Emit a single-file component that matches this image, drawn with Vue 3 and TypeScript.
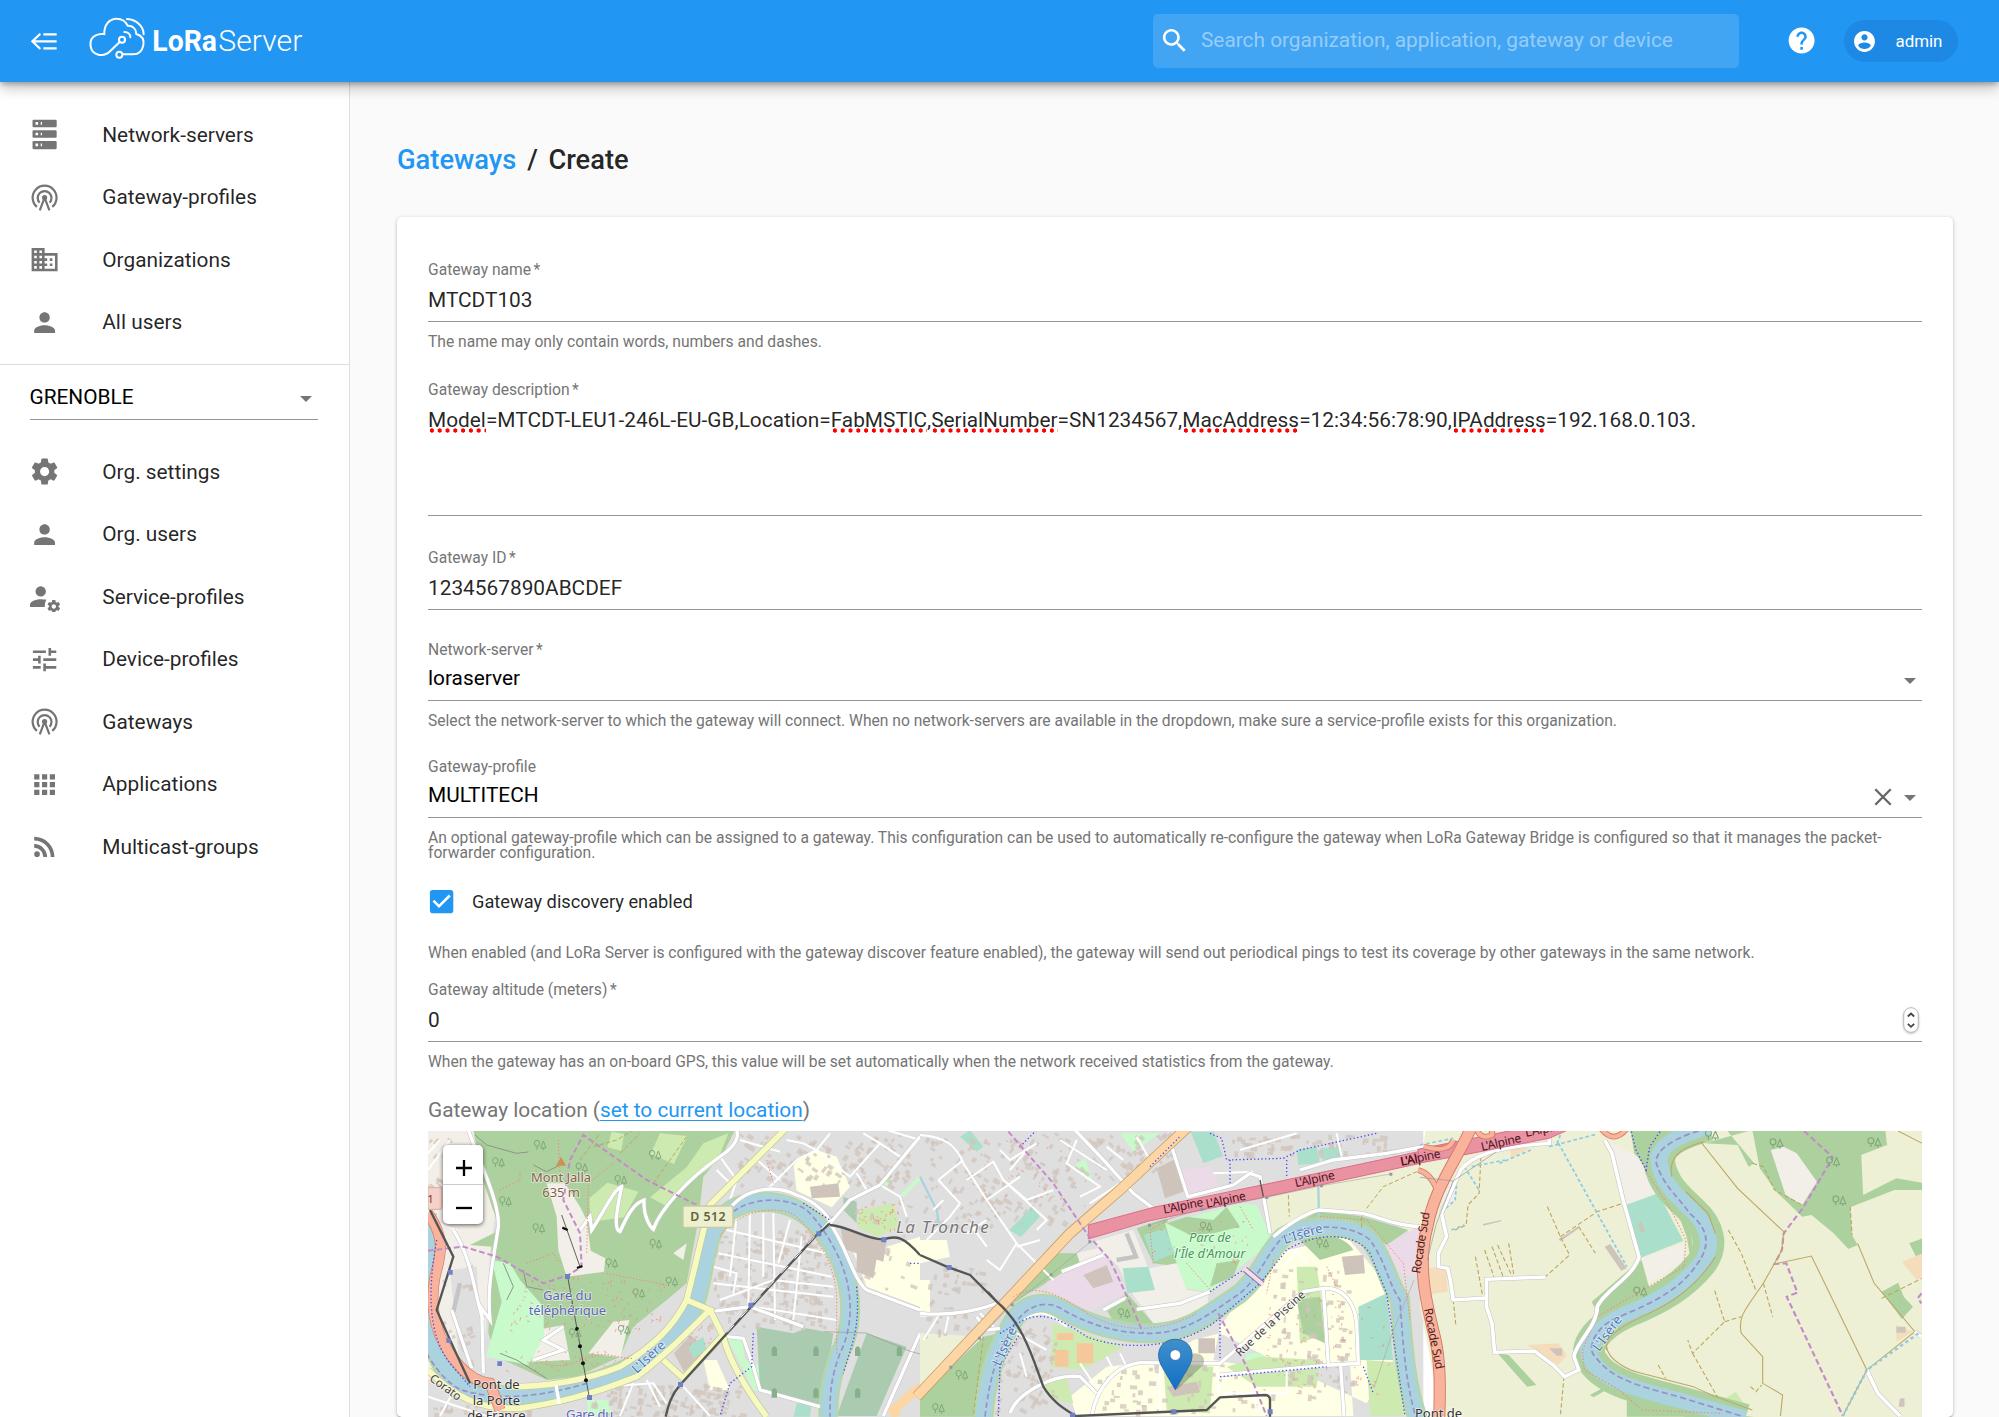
<script setup lang="ts">
interface NavItem { label: string; icon: string }
interface Block { x: number; y: number; w: number; h: number; a: number }

const person = 'M12 12c2.21 0 4-1.79 4-4s-1.79-4-4-4-4 1.79-4 4 1.79 4 4 4zm0 2c-2.67 0-8 1.34-8 4v2h16v-2c0-2.66-5.33-4-8-4z'
const gear = 'M19.43 12.98c.04-.32.07-.64.07-.98s-.03-.66-.07-.98l2.11-1.65c.19-.15.24-.42.12-.64l-2-3.46c-.12-.22-.39-.3-.61-.22l-2.49 1c-.52-.4-1.08-.73-1.69-.98l-.38-2.65C14.46 2.18 14.25 2 14 2h-4c-.25 0-.46.18-.49.42l-.38 2.65c-.61.25-1.17.59-1.69.98l-2.49-1c-.23-.09-.49 0-.61.22l-2 3.46c-.13.22-.07.49.12.64l2.11 1.65c-.04.32-.07.65-.07.98s.03.66.07.98l-2.11 1.65c-.19.15-.24.42-.12.64l2 3.46c.12.22.39.3.61.22l2.49-1c.52.4 1.08.73 1.69.98l.38 2.65c.03.24.24.42.49.42h4c.25 0 .46-.18.49-.42l.38-2.65c.61-.25 1.17-.59 1.69-.98l2.49 1c.23.09.49 0 .61-.22l2-3.46c.12-.22.07-.49-.12-.64l-2.11-1.65zM12 15.5c-1.93 0-3.5-1.57-3.5-3.5s1.57-3.5 3.5-3.5 3.5 1.57 3.5 3.5-1.57 3.5-3.5 3.5z'

const paths: Record<string, string> = {
  server: 'M3.5 .5h17a.8.8 0 0 1 .8.8v4.2a.8.8 0 0 1-.8.8h-17a.8.8 0 0 1-.8-.8V1.300a.8.8 0 0 1 .8-.8zM5 2.400v2h2v-2zm4 0v2h1v-2zM3.500 8.700h17a.8.8 0 0 1 .8.8v4.200a.8.8 0 0 1-.8.8h-17a.8.8 0 0 1-.8-.8V9.500a.8.8 0 0 1 .8-.8zM5 10.600v2h2v-2zm4 0v2h1v-2zM3.500 16.900h17a.8.8 0 0 1 .8.8v4.700a.8.8 0 0 1-.8.8h-17a.8.8 0 0 1-.8-.8v-4.700a.8.8 0 0 1 .8-.8zM5 18.900v2h2v-2zm4 0v2h1v-2z',
  domain: 'M12 7V3H2v18h20V7H12zM6 19H4v-2h2v2zm0-4H4v-2h2v2zm0-4H4V9h2v2zm0-4H4V5h2v2zm4 12H8v-2h2v2zm0-4H8v-2h2v2zm0-4H8V9h2v2zm0-4H8V5h2v2zm10 12h-8v-2h2v-2h-2v-2h2v-2h-2V9h8v10zm-2-8h-2v2h2v-2zm0 4h-2v2h2v-2z',
  person,
  gear,
  tune: 'M3 17v2h6v-2H3zM3 5v2h10V5H3zm10 16v-2h8v-2h-8v-2h-2v6h2zM7 9v2H3v2h4v2h2V9H7zm14 4v-2H11v2h10zm-6-4h2V7h4V5h-4V3h-2v6z',
  apps: 'M4 8h4V4H4v4zm6 12h4v-4h-4v4zm-6 0h4v-4H4v4zm0-6h4v-4H4v4zm6 0h4v-4h-4v4zm6-10v4h4V4h-4zm-6 4h4V4h-4v4zm6 6h4v-4h-4v4zm0 6h4v-4h-4v4z',
  rss: 'M6.18 15.640a2.180 2.180 0 1 1 0 4.360 2.180 2.180 0 0 1 0-4.360M4 4.440A15.560 15.560 0 0 1 19.560 20h-2.830A12.730 12.730 0 0 0 4 7.270V4.440m0 5.660a9.900 9.900 0 0 1 9.900 9.900h-2.830A7.070 7.070 0 0 0 4 12.930V10.100z',
}

const globalItems: NavItem[] = [
  { label: 'Network-servers', icon: 'server' },
  { label: 'Gateway-profiles', icon: 'antenna' },
  { label: 'Organizations', icon: 'domain' },
  { label: 'All users', icon: 'person' },
]
const orgItems: NavItem[] = [
  { label: 'Org. settings', icon: 'gear' },
  { label: 'Org. users', icon: 'person' },
  { label: 'Service-profiles', icon: 'service' },
  { label: 'Device-profiles', icon: 'tune' },
  { label: 'Gateways', icon: 'antenna' },
  { label: 'Applications', icon: 'apps' },
  { label: 'Multicast-groups', icon: 'rss' },
]
const description = [
  { t: 'Model', bad: true }, { t: '=MTCDT-LEU1-246L-EU-GB,Location=', bad: false },
  { t: 'FabMSTIC', bad: true }, { t: ',', bad: false }, { t: 'SerialNumber', bad: true },
  { t: '=SN1234567,', bad: false }, { t: 'MacAddress', bad: true },
  { t: '=12:34:56:78:90,', bad: false }, { t: 'IPAddress', bad: true }, { t: '=192.168.0.103.', bad: false },
]

// Seeded generator so the building footprints are the same on every load
let seed = 7
const rnd = () => { seed = (seed * 16807) % 2147483647; return seed / 2147483647 }
const scatter = (x: number, y: number, w: number, h: number, n: number, angle: number): Block[] =>
  Array.from({ length: n }, () => ({
    x: x + rnd() * w, y: y + rnd() * h, w: 7 + rnd() * 15, h: 6 + rnd() * 9,
    a: angle + (rnd() > 0.5 ? 90 : 0),
  }))
const westBuildings = [
  ...scatter(960, 40, 520, 150, 120, 35), ...scatter(880, 330, 340, 290, 190, 4),
  ...scatter(530, 790, 450, 100, 110, 12), ...scatter(30, 50, 110, 250, 35, 40),
  ...scatter(60, 440, 110, 300, 25, 70), ...scatter(40, 850, 330, 40, 30, 10), ...scatter(1120, 240, 360, 270, 50, 20),
]
const eastBuildings = [
  ...scatter(20, 40, 450, 280, 150, 32), ...scatter(450, 40, 320, 130, 60, 45),
  ...scatter(20, 440, 180, 200, 45, 10), ...scatter(240, 620, 180, 250, 70, 30),
  ...scatter(540, 730, 460, 140, 60, 2), ...scatter(1060, 430, 250, 400, 100, 5), ...scatter(920, 40, 500, 60, 60, 0),
]
const pathSpecks = [...scatter(270, 470, 470, 160, 110, 20), ...scatter(250, 690, 350, 60, 30, 40), ...scatter(770, 600, 120, 90, 25, 10), ...scatter(1310, 250, 130, 90, 30, 0)]
const eastSpecks = [...scatter(1030, 520, 380, 300, 80, 20), ...scatter(690, 300, 300, 130, 30, 10), ...scatter(150, 60, 350, 200, 30, 35)]
const trees = [[360, 75], [235, 127], [256, 244], [356, 325], [485, 143], [602, 180], [707, 372], [575, 430], [656, 520], [755, 485], [612, 630], [465, 640], [705, 105]]
const tiny = (b: Block) => `translate(${b.x.toFixed(1)} ${b.y.toFixed(1)}) rotate(${b.a})`
</script>

<template>
  <div class="app">
    <header class="bar">
      <svg class="menu" viewBox="94 94 78 56"><path d="M122 99L98 122l24 23M131 101h40M100 122h71M131 143h40" /></svg>
      <svg class="logo" viewBox="262 45 660 140">
        <g class="cloud">
          <path d="M357 126L329 153C318 164 305 167 293 164C263 157 263 116 285 106C294 101 302 101 311 102C310 74 326 56 348 56C365 56 376 66 381 77C396 76 407 87 407 102C424 107 431 120 428 136C424 155 412 163 397 163H367" />
          <circle cx="356" cy="164" r="9" /><circle cx="364" cy="119" r="9" />
          <path d="M371 96C382 96 389 103 389 112M379 57C404 58 429 77 429 103" />
        </g>
        <text x="455" y="153" class="lora" textLength="194" lengthAdjust="spacingAndGlyphs">LoRa</text>
        <text x="653" y="153" class="serv" textLength="252" lengthAdjust="spacingAndGlyphs">Server</text>
      </svg>
      <div class="search">
        <svg viewBox="0 0 24 24" class="ic"><path d="M15.5 14h-.79l-.28-.27C15.410 12.590 16 11.110 16 9.500 16 5.910 13.090 3 9.500 3S3 5.910 3 9.500 5.910 16 9.500 16c1.610 0 3.090-.59 4.230-1.570l.27.28v.79l5 4.990L20.490 19l-4.990-5zm-6 0C7.010 14 5 11.990 5 9.500S7.010 5 9.500 5 14 7.010 14 9.500 11.990 14 9.500 14z" /></svg>
        <span>Search organization, application, gateway or device</span>
      </div>
      <svg viewBox="0 0 24 24" class="ic help"><path d="M12 2C6.480 2 2 6.480 2 12s4.480 10 10 10 10-4.480 10-10S17.520 2 12 2zm1 17h-2v-2h2v2zm2.070-7.750l-.9.92C13.450 12.900 13 13.500 13 15h-2v-.5c0-1.100.45-2.100 1.170-2.830l1.240-1.260c.37-.36.59-.86.59-1.410 0-1.100-.9-2-2-2s-2 .9-2 2H8c0-2.210 1.790-4 4-4s4 1.790 4 4c0 .88-.36 1.680-.93 2.250z" /></svg>
      <div class="chip">
        <svg viewBox="0 0 24 24"><path d="M12 2C6.480 2 2 6.480 2 12s4.480 10 10 10 10-4.480 10-10S17.520 2 12 2zm0 3c1.660 0 3 1.340 3 3s-1.340 3-3 3-3-1.340-3-3 1.340-3 3-3zm0 14.200c-2.500 0-4.710-1.280-6-3.220.03-1.990 4-3.080 6-3.080 1.990 0 5.970 1.090 6 3.080-1.290 1.940-3.500 3.220-6 3.220z" /></svg>
        <span>admin</span>
      </div>
    </header>

    <div class="body">
      <nav class="side">
        <template v-for="(group, g) in [globalItems, orgItems]" :key="g">
          <div v-if="g === 1" class="org">
            <div class="orgselect"><span>GRENOBLE</span><i class="caret" /></div>
          </div>
          <ul :class="g === 0 ? 'first' : 'second'">
            <li v-for="item in group" :key="item.label">
              <svg viewBox="0 0 24 24" class="ic">
                <g v-if="item.icon === 'antenna'" class="antenna">
                  <path d="M6.100 19.100A9.200 9.200 0 1 1 17.900 19.100" /><path d="M8.100 15.900A5.300 5.300 0 1 1 15.900 15.900" />
                  <path d="M12 12L8.300 21.800M12 12L15.700 21.800" /><circle cx="12" cy="12" r="2" />
                </g>
                <g v-else-if="item.icon === 'service'">
                  <path d="M9 12a4 4 0 1 0 0-8 4 4 0 0 0 0 8zm0 2c-2.700 0-8.200 1.300-8.200 4v2h11.300c0-2 .4-4.300 1.300-5.500-1.600-.4-3.200-.5-4.400-.5z" />
                  <path :d="gear" transform="translate(13.200 13.700) scale(.49)" />
                </g>
                <path v-else fill-rule="evenodd" :d="paths[item.icon]" />
              </svg>
              <span>{{ item.label }}</span>
            </li>
          </ul>
        </template>
      </nav>

      <main>
        <h1><a>Gateways</a><b class="sep">/</b><span>Create</span></h1>
        <section class="card">
          <div class="field">
            <label>Gateway name<em>*</em></label><div class="value">MTCDT103</div>
            <p>The name may only contain words, numbers and dashes.</p>
          </div>
          <div class="field desc">
            <label>Gateway description<em>*</em></label>
            <div class="value area"><span v-for="(s, i) in description" :key="i" :class="{ bad: s.bad }">{{ s.t }}</span></div>
          </div>
          <div class="field gid">
            <label>Gateway ID<em>*</em></label><div class="value">1234567890ABCDEF</div>
          </div>
          <div class="field select ns">
            <label>Network-server<em>*</em></label>
            <div class="value"><span>loraserver</span><i class="caret" /></div>
            <p>Select the network-server to which the gateway will connect. When no network-servers are available in the dropdown, make sure a service-profile exists for this organization.</p>
          </div>
          <div class="field select gp">
            <label>Gateway-profile</label>
            <div class="value"><span>MULTITECH</span><svg class="clear" viewBox="0 0 18 18"><path d="M1.300 1.300l15.400 15.400M16.700 1.300L1.300 16.700" /></svg><i class="caret" /></div>
            <p>An optional gateway-profile which can be assigned to a gateway. This configuration can be used to automatically re-configure the gateway when LoRa Gateway Bridge is configured so that it manages the packet-<br>forwarder configuration.</p>
          </div>
          <div class="check">
            <svg viewBox="0 0 24 24"><path d="M19 3H5c-1.110 0-2 .9-2 2v14c0 1.100.89 2 2 2h14c1.110 0 2-.9 2-2V5c0-1.100-.89-2-2-2zm-9 14l-5-5 1.410-1.410L10 14.170l7.590-7.590L19 8l-9 9z" /></svg>
            <span>Gateway discovery enabled</span>
          </div>
          <p class="disc">When enabled (and LoRa Server is configured with the gateway discover feature enabled), the gateway will send out periodical pings to test its coverage by other gateways in the same network.</p>
          <div class="field alt">
            <label>Gateway altitude (meters)<em>*</em></label>
            <div class="value"><span>0</span><svg class="spin" viewBox="0 0 16 26"><rect x=".7" y=".7" width="14.600" height="24.600" rx="7.300" /><path d="M4.800 9.500L8 6.500l3.200 3M4.800 16.800L8 19.800l3.200-3" /></svg></div>
            <p>When the gateway has an on-board GPS, this value will be set automatically when the network received statistics from the gateway.</p>
          </div>
          <div class="loc">Gateway location (<a>set to current location</a>)</div>
          <div class="map">
            <svg viewBox="428 1131 1494 286" class="tiles">
              <!-- western tiles: Bastille hill and the old town -->
              <g transform="translate(420 1120) scale(.33333)">
                <rect width="1500" height="900" class="res" />
                <path class="land" d="M24 30H170L230 250 210 400 190 760 24 780z" />
                <path class="res" d="M90 450L170 440 190 760 120 750z" />
                <path class="wood" d="M160 30H945L910 100 850 170 835 300 800 490 740 540 640 620 600 710 470 770 380 780 230 710 205 640 215 380 150 375 240 330 185 170z" />
                <path class="grass" d="M575 35L612 42 604 92 562 82zM720 40L802 48 762 132 692 102zM850 70L925 40 890 130 800 192 745 262 690 232 800 142zM562 188L655 215 612 292 512 306 508 235z" />
                <path class="land" d="M380 190L435 190 480 260 500 300 512 392 556 415 552 455 440 470 415 390 410 290zM350 630L430 615 450 720 335 725zM580 605L628 600 602 712 505 700zM760 400L800 370 790 420z" />
                <path class="park" d="M215 420L270 430 300 480 370 560 372 650 325 735 198 710 245 545zM920 650L965 655 975 720 1030 740 1030 820 1000 810zM1400 200L1380 180 1420 175zM1440 225L1500 165 1500 180 1450 232zM500 840h60l20 48h-75z" />
                <path class="uni" d="M1120 130L1190 90 1250 110 1290 200 1235 262 1130 212zM1290 370L1400 380 1500 350V560L1340 500zM850 720h40l40 90h-60z" />
                <path class="big" d="M1170 200L1255 190 1260 230 1175 235zM1262 325L1400 362 1390 425 1272 388zM1310 395l60 20-10 60-50-20zM762 700l50-55 50 45-70 65z" />
                <path class="cem" d="M1010 620L1120 640 1160 625 1240 640 1205 865 1020 810zM1340 640L1460 680 1370 888H1250zM1270 230L1310 245 1310 310 1270 270z" />
                <path class="grass" d="M1320 270L1420 250 1440 320 1370 350 1310 320z" />
                <path class="pitch" d="M805 680L850 650 860 690 820 715zM1130 850h45l-5 40h-50z" />
                <rect v-for="(b, i) in westBuildings" :key="i" class="bld" :width="b.w" :height="b.h" :transform="tiny(b)" />
                <rect v-for="(b, i) in pathSpecks" :key="'p' + i" class="speck" :width="b.w / 2" height="2.500" :transform="tiny(b)" />
                <path class="street" d="M990 270L985 560M1060 280L1065 600M920 330L1220 400M895 400L1235 470M880 440L950 460 940 520M880 490L1240 530M900 540L1060 480 1240 500M1000 560L1250 600M950 290L930 470M1110 300L1075 430M1145 350L1120 600M1030 280V470M1500 60L1400 30M1040 210L1100 150 1130 120 1190 90M1100 60L1150 70 1190 90 1290 170 1380 70 1330 40M1190 90L1230 40M1310 160L1340 210M1440 110L1380 70M1000 110L1080 180M960 60L1080 95M900 110L950 180 930 240M890 150L940 200M540 800L700 790 740 850M600 888L640 790M680 780L720 860M790 800L870 888M120 780L60 888M24 830L200 888M250 850L220 888M60 60L24 100M90 60L24 150M110 330L24 300M1380 195L1440 230 1460 290" />
                <path class="bank" d="M20 280C20 500 -10 700 125 800C250 850 400 820 500 790C640 750 720 690 770 640C840 570 840 480 860 400C880 290 940 245 1030 245C1150 245 1220 330 1260 420C1310 540 1290 640 1260 700C1230 780 1225 830 1225 890" />
                <path class="river" d="M20 280C20 500 -10 700 125 800C250 850 400 820 500 790C640 750 720 690 770 640C840 570 840 480 860 400C880 290 940 245 1030 245C1150 245 1220 330 1260 420C1310 540 1290 640 1260 700C1230 780 1225 830 1225 890" />
                <path class="bound" d="M20 700C60 770 100 800 125 810C250 850 400 820 500 790M940 275C1000 230 1100 230 1160 270C1220 330 1250 400 1260 420C1310 540 1290 640 1260 700C1230 780 1230 830 1230 890" />
                <g class="wcase">
                  <path d="M930 265C980 200 1070 195 1130 225C1190 245 1230 290 1230 310C1280 380 1300 480 1340 510L1500 570M1230 310L1290 240 1380 195 1500 50M870 575L990 560M480 330L510 290 515 330C560 260 580 210 605 200C590 270 580 330 600 335C620 290 640 250 672 240C670 290 690 320 700 328C720 270 800 180 900 110C930 90 960 60 950 30M145 30C180 130 240 250 235 320C220 420 200 500 210 600L185 565 190 760M100 330C160 420 170 560 190 600M95 570L155 745M100 575L120 490M990 560L1150 620M1500 640L1390 888M340 720L430 690 370 660 430 620M920 650L970 655 1000 740 1020 810 1200 860" />
                </g>
                <g class="wroad">
                  <path d="M930 265C980 200 1070 195 1130 225C1190 245 1230 290 1230 310C1280 380 1300 480 1340 510L1500 570M1230 310L1290 240 1380 195 1500 50M870 575L990 560M480 330L510 290 515 330C560 260 580 210 605 200C590 270 580 330 600 335C620 290 640 250 672 240C670 290 690 320 700 328C720 270 800 180 900 110C930 90 960 60 950 30M145 30C180 130 240 250 235 320C220 420 200 500 210 600L185 565 190 760M100 330C160 420 170 560 190 600M95 570L155 745M990 560L1150 620M1500 640L1390 888M340 720L430 690 370 660 430 620M920 650L970 655 1000 740 1020 810 1200 860" />
                </g>
                <path class="ycase" d="M1095 28L870 255C850 330 830 420 800 540C760 620 700 680 600 740C500 780 400 800 270 800M800 540L870 570C800 640 730 710 650 770C500 830 400 850 300 865C180 870 100 830 24 750M870 570L910 650C930 730 980 810 1040 890M730 720L790 775 905 650" />
                <path class="yroad" d="M1095 28L870 255C850 330 830 420 800 540C760 620 700 680 600 740C500 780 400 800 270 800M800 540L870 570C800 640 730 710 650 770C500 830 400 850 300 865C180 870 100 830 24 750M870 570L910 650C930 730 980 810 1040 890M730 720L790 775 905 650" />
                <path class="wroad" d="M408 795L418 852" />
                <path d="M24 280C75 350 65 400 45 470C28 560 45 640 95 710C125 750 160 785 210 790L240 870" stroke="#cf7d69" stroke-width="33" fill="none" />
                <path d="M24 280C75 350 65 400 45 470C28 560 45 640 95 710C125 750 160 785 210 790L240 870" stroke="#f9b29c" stroke-width="29" fill="none" />
                <path d="M1500 800L1420 870 1430 890" stroke="#fcd6a4" stroke-width="28" fill="none" />
                <path class="blue" d="M50 360C25 500 20 640 90 730L150 800M1000 640L995 740 930 790 900 888M1310 500C1320 620 1300 660 1270 760M1150 250L1230 300M1470 430h30" />
                <path class="foot" d="M360 725C440 760 480 710 520 710C560 690 600 720 640 715M900 350C950 270 1080 250 1130 290C1210 370 1240 440 1250 520V700M240 210L300 180V150M320 430L400 400 420 430M415 60L420 160M580 130L505 190 500 400M560 460L740 495M1040 120L1060 190" />
                <path class="fence" d="M165 45L200 75 290 100 325 96M340 135L380 155 430 130M250 430L280 500 260 540M310 450L320 500 370 510M240 700L290 720 380 775" />
                <path class="cliff" d="M520 80L590 60 640 30M700 190L800 50M480 120L540 40M600 100L660 40" />
                <path class="bound wide" d="M24 392L130 380 230 410 370 490 445 465 485 440 480 340 430 240 450 120 490 45 680 180 830 255" />
                <path class="rail" d="M30 270L100 410 50 570 90 660 150 790M1230 310L1190 345 780 795C750 830 745 860 737 890M1230 315C1290 320 1340 360 1390 358C1430 345 1450 350 1500 405" />
                <path d="M1225 305L905 655" stroke="#fff" stroke-width="3" stroke-dasharray="30 30" fill="none" />
                <path d="M425 285L480 440M443 470L508 833" stroke="#444" stroke-width="2.500" fill="none" />
                <g fill="#111"><circle cx="471" cy="627" r="6" /><circle cx="480" cy="679" r="6" /><circle cx="489" cy="730" r="6" /><circle cx="498" cy="781" r="6" /></g>
                <path d="M427 323l16 7M471 444l16-6" stroke="#111" stroke-width="7" />
                <path class="stop" d="M84 450h14v14H84zM79 654h14v14H79zM232 724h14v14h-14zM435 462h15v15h-15zM501 825h15v15h-15zM774 786h15v15h-15zM985 548h15v15h-15zM1189 334h15v15h-15zM1384 352h15v15h-15z" />
                <g v-for="(t, i) in trees" :key="'t' + i" class="tree" :transform="`translate(${t[0]} ${t[1]})`"><ellipse cx="-9" cy="-5" rx="8" ry="9" /><path d="M-9 4V14M10 -12L2 9H18zM10 9V16" /></g>
                <path class="tomb" d="M1055 708v-22q8-14 16 0v22zM1180 708v-22q8-14 16 0v22zM1305 708v-22q8-14 16 0v22zM1430 708v-22q8-14 16 0v22zM1055 833v-22q8-14 16 0v22zM1180 833v-22q8-14 16 0v22zM1305 833v-22q8-14 16 0v22z" />
                <path d="M1213 635L1338 639 1471 694 1500 702" stroke="#999" stroke-width="2" fill="none" />
                <path d="M423 110L438 137H408z" fill="#d08f55" />
                <path d="M24 203H60Q66 203 66 210V262Q66 268 60 268H24z" fill="#f5d2c9" stroke="#dca99b" stroke-width="3" />
                <text x="22" y="249" font-size="34" fill="#7c3527">1</text>
                <rect x="789" y="258" width="150" height="64" rx="5" fill="#ecefd0" stroke="#c9cb9a" stroke-width="4" />
                <text x="811" y="304" font-size="37" font-weight="600" fill="#5f6337" textLength="106">D 512</text>
                <g class="halo" font-size="39">
                  <text x="333" y="185" fill="#8a5f49" textLength="180">Mont Jalla</text><text x="367" y="232" fill="#8a5f49" textLength="113">635 m</text>
                  <text x="369" y="539" fill="#5a65ba" textLength="146">Gare du</text><text x="326" y="586" fill="#5a65ba" textLength="232">téléphérique</text>
                  <text x="438" y="898" fill="#5a65ba" textLength="142">Gare du</text>
                  <text x="160" y="808" fill="#333" textLength="139">Pont de</text><text x="158" y="855" fill="#333" textLength="142">la Porte</text><text x="142" y="900" fill="#333" textLength="175">de France</text>
                  <text transform="translate(650 762) rotate(-43)" fill="#5077ba" textLength="122">L'Isère</text>
                  <text transform="translate(26 780) rotate(36)" font-size="35" fill="#444" textLength="108">Corato</text>
                </g>
              </g>

              <!-- central tiles: La Tronche and the campus -->
              <g transform="translate(920 1120) scale(.33333)">
                <rect width="1510" height="900" class="res" />
                <path class="farm" d="M1035 220L1510 120V360L1440 320 1330 280 1200 270 1060 350z" />
                <path class="wood" d="M0 830L190 650 240 640 190 890H0zM410 400L520 400 360 500 260 560 300 520zM560 570L620 520 700 610 880 580 1050 480 1030 420 1060 350 1200 270 1330 290 1465 330 1400 375 1280 300 1100 330 1000 500 800 620 600 640zM650 325L740 295 780 440 700 430z" />
                <path class="park" d="M735 310L970 250 1010 255 1050 345 1035 380 950 450 870 515 790 505 770 430zM600 40H720L640 95zM980 700l60 0 10 40-80 0zM465 135l30-20 20 60-10 10z" />
                <path class="wood" d="M740 310L800 290 880 300 920 260 960 320 880 340 810 345zM890 430L960 420 940 470 870 500z" />
                <path class="farm" d="M0 640L190 650 0 820z" />
                <path class="ind" d="M380 485L550 405 620 515 500 575 380 510zM1390 380L1510 310V470L1440 460zM780 150L870 140 900 200 800 220z" />
                <path class="land" d="M520 365L640 330 685 445 770 430 800 510 865 520 860 600 700 610 640 525 595 440zM470 400L550 380 560 410 480 430z" />
                <path class="uni" d="M0 360L80 360 90 410 0 430zM0 480h30v110H0zM1060 400L1280 350 1390 480 1420 720 1340 850 1060 720 900 640 820 660 740 720 560 740 450 830 470 888H1300L1290 730 1000 740 880 720 900 620z" />
                <path class="grass" d="M400 610L610 680 490 750 390 740zM1130 440L1190 440 1220 640 1140 670zM1340 720L1460 730 1450 888H1350zM730 730L880 740 870 880 740 870zM370 790l70-20 20 80-60-10zM920 740l100-30 180 10-10 80-180 0z" />
                <path class="wood" d="M1140 360C1200 330 1280 350 1300 390L1200 420zM1130 540L1200 530 1215 670 1150 640z" />
                <path class="pitch" d="M672 345L735 325 765 400 700 425zM268 330L335 262 360 290 302 352zM608 445L685 440 705 510 622 520zM812 35H880L910 108 850 130zM1315 560L1400 520 1420 720H1320zM120 50L150 30 190 80 170 95zM1130 90l60-10 10 50-65 5zM1200 85l60-5 10 35-60 10z" />
                <path class="big" d="M710 145L770 115 790 215 735 235zM1265 410L1330 405 1335 460 1275 465zM835 655h50v45h-50zM490 465l70-30 20 50-60 20zM740 800l90-15 10 30-80 15z" />
                <path fill="#f6c79a" d="M410 640h50v20h-50zM405 690h40v50h-40zM470 670h50v60h-50z" />
                <rect v-for="(b, i) in eastBuildings" :key="i" class="bld" :width="b.w" :height="b.h" :transform="tiny(b)" />
                <rect v-for="(b, i) in eastSpecks" :key="'s' + i" class="speck" :width="b.w / 2" height="2.500" :transform="tiny(b)" />
                <path class="bank" d="M190 895C200 760 240 670 270 620C310 540 380 540 430 570C520 620 600 640 690 640C800 640 870 580 960 520C1020 470 1040 400 1090 350C1150 315 1290 305 1350 360C1400 430 1400 480 1440 540C1450 700 1460 800 1495 900" />
                <path class="river" d="M190 895C200 760 240 670 270 620C310 540 380 540 430 570C520 620 600 640 690 640C800 640 870 580 960 520C1020 470 1040 400 1090 350C1150 315 1290 305 1350 360C1400 430 1400 480 1440 540C1450 700 1460 800 1495 900" />
                <path d="M0 170L50 270 60 330M1195 200L1197 290" stroke="#aad3df" stroke-width="7" fill="none" />
                <path class="bound" d="M195 890C210 760 240 680 275 630C310 555 380 535 430 570C520 620 600 640 690 640C800 640 870 580 960 520C1020 470 1040 400 1090 350C1150 315 1290 305 1350 360C1400 430 1400 480 1440 540C1450 700 1460 800 1490 900" />
                <path class="street" d="M0 45C80 50 110 80 130 130L200 240 290 370 400 480M55 180L130 120M55 180L120 250 90 290M140 180L220 125 250 180 320 240 400 210M200 240L300 170M250 180L380 300 350 330M140 340L200 300M290 370L240 450 200 420M320 90L270 150M240 90L270 120 350 70M90 290L20 360M150 310L200 380M360 360L290 380M420 60L560 150M470 60L440 130 540 200 480 230M600 190L510 250M560 80L610 120M650 50L690 120M70 240L40 270M560 570L620 530M960 90L1130 40M1250 40L1265 110M10 660L60 580M75 640L85 590M180 580L230 630M290 640L380 690M300 700L320 770M480 730L520 790M560 710L580 750M600 700L620 740M720 740V880M890 740L900 830M1100 740V820H910M1090 440L1130 390 1160 430M1000 800L1010 880M880 160L1000 155" />
                <g class="wcase"><path d="M465 30L560 130 640 220 700 265M755 80L805 235M0 580C100 590 180 570 260 540L440 340M805 230L940 195 990 160 1020 170 1050 340M1060 350C1120 300 1180 270 1200 270L1330 280C1400 300 1440 320 1510 320M1140 150L1240 120 1400 100 1510 80M270 880C290 820 400 760 480 770L530 820M515 888C530 800 590 730 670 728L900 730 1120 540 1150 515 1210 505 1225 735M1210 505C1270 500 1305 550 1310 610L1315 730 1230 735 900 765M1262 735L1272 888M240 625L200 630 170 590M650 568L780 550 870 515M425 455L550 405M550 570L615 535M620 340L648 410 590 420" /></g>
                <g class="wroad"><path d="M465 30L560 130 640 220 700 265M755 80L805 235M0 580C100 590 180 570 260 540L440 340M805 230L940 195 990 160 1020 170 1050 340M1060 350C1120 300 1180 270 1200 270L1330 280C1400 300 1440 320 1510 320M1140 150L1240 120 1400 100 1510 80M270 880C290 820 400 760 480 770L530 820M515 888C530 800 590 730 670 728L900 730 1120 540 1150 515 1210 505 1225 735M1210 505C1270 500 1305 550 1310 610L1315 730 1230 735 900 765M1262 735L1272 888M240 625L200 630 170 590M650 568L780 550 870 515M425 455L550 405M550 570L615 535" /></g>
                <path d="M310 600C370 560 400 590 440 620" class="street" />
                <path d="M810 15L600 210 450 340 -10 830" stroke="#c9a06c" stroke-width="33" fill="none" /><path d="M810 15L600 210 450 340 -10 830" stroke="#fcd6a4" stroke-width="28" fill="none" />
                <path d="M505 315L700 262 1050 190 1510 92V128L1050 228 690 302 505 357z" fill="#e892a2" stroke="#dc6f88" stroke-width="3" />
                <path class="blue" d="M300 80L350 30M240 640L310 600C380 570 440 610 500 650C600 690 760 690 880 610L1020 490 1100 390C1180 340 1300 330 1350 400L1400 520 1430 720 1455 888M235 888L240 740 300 640M870 40L905 55 920 120 1090 115 1140 90 1370 40M930 120L930 190M1100 120V170M870 515L970 450M900 770L1220 740M900 600V720M1330 740L1360 820M690 140L780 50" />
                <path class="foot" d="M280 530C340 490 420 520 500 580C600 640 720 640 830 580M700 430L690 330 760 290M800 430L880 520M1200 290L1340 300 1450 430 1470 600M1060 420L1040 520M960 260L1000 330M1220 440L1250 500" />
                <path class="cliff" d="M1105 225L1108 290M1340 265L1390 200 1490 155M190 650L160 888M1325 290V330" />
                <path class="bound wide" d="M265 35L400 190 500 340 570 420 640 570 670 640M895 580L980 740 1040 888" />
                <path class="rail" d="M0 405L80 440 150 465 230 545C310 610 340 720 370 800C400 850 440 870 470 890M470 888L860 870 900 832 1035 825Q1050 826 1050 840V890" />
                <path d="M205 515L290 610M1020 180L1030 230" stroke="#555" stroke-width="4" fill="none" />
                <path d="M975 448L1028 492" stroke="#8d6fa8" stroke-width="18" fill="none" /><path d="M973 446L1030 494" stroke="#f3dfe6" stroke-width="12" fill="none" />
                <path class="stop" d="M80 435h15v15H80zM754 868h15v15h-15zM1043 868h15v15h-15zM450 878h15v15h-15z" />
                <path d="M510 366L393 464 276 554 178 654 92 741M688 315L845 267 1040 232 1204 197 1412 162" stroke="#999" stroke-width="1.500" fill="none" />
                <path fill="#999" d="M505 361h9v9h-9zM389 460h9v9h-9zM272 550h9v9h-9zM174 650h9v9h-9zM88 737h9v9h-9zM684 311h9v9h-9zM841 263h9v9h-9zM1036 228h9v9h-9zM1200 193h9v9h-9zM1408 158h9v9h-9z" />
                <path d="M1482 480L1416 642 1362 804" stroke="#aaa" stroke-width="2" fill="none" />
                <g v-for="(t, i) in [[125, 765], [55, 865], [858, 320], [612, 580], [1208, 370]]" :key="'t' + i" class="tree" :transform="`translate(${t[0]} ${t[1]})`"><ellipse cx="-9" cy="-5" rx="8" ry="9" /><path d="M-9 4V14M10 -12L2 9H18zM10 9V16" /></g>
                <g class="halo">
                  <text x="-72" y="340" font-size="51" fill="#777" font-style="italic" textLength="278">La Tronche</text>
                  <text x="807" y="366" font-size="39" fill="#3f9a54" font-style="italic" textLength="126">Parc de</text>
                  <text x="763" y="413" font-size="39" fill="#3f9a54" font-style="italic" textLength="213">l'Île d'Amour</text>
                  <text transform="translate(1094 372) rotate(-17)" font-size="39" fill="#5077ba" textLength="122">L'Isère</text>
                  <text transform="translate(240 740) rotate(-65)" font-size="39" fill="#5077ba" textLength="122">L'Isère</text>
                  <text transform="translate(960 711) rotate(-43)" font-size="34" fill="#444" textLength="270">Rue de la Piscine</text>
                </g>
                <g font-size="36" fill="#4b1424">
                  <text transform="translate(732 281) rotate(-11)" textLength="122">L'Alpine</text><text transform="translate(860 264) rotate(-12)" textLength="122">L'Alpine</text>
                  <text transform="translate(1127 202) rotate(-12)" textLength="122">L'Alpine</text><text transform="translate(1444 137) rotate(-9)" textLength="122">L'Alpine</text>
                </g>
              </g>

              <!-- eastern tiles: farmland along the river -->
              <g transform="translate(1420 1120) scale(.36928 .33333)">
                <path class="farm" d="M15 30H1400V900H60L0 560V140z" />
                <path class="wood" d="M570 30H665L625 90 612 150 580 100zM770 70L860 75 890 140 905 130 830 30H1260L1265 75 1195 105 1200 225 1290 175 1370 190V210L1285 210 1165 262 1170 345 1185 375 1160 387 1120 340 1060 285 1035 290 965 215 920 145 900 30zM565 450L600 420 620 500 550 560 480 580 465 545zM210 700L240 705 315 795 290 800zM1325 370L1360 355V420L1350 425zM1250 515L1295 488 1310 530 1335 560 1305 597zM560 830L700 860 820 880 905 890H560zM460 825L510 795 520 800 470 832z" />
                <path class="land" d="M515 65L590 110 645 215 555 255 525 140zM950 90L985 80 1020 100 1075 185 1035 255 990 225zM600 415L715 370 710 430 620 490zM60 210L95 200 95 240 65 270z" />
                <path class="pitch" d="M556 256L645 220 713 362 598 413z" />
                <path class="grass" d="M820 840L855 815 880 855z" />
                <path class="yard" d="M5 445L70 440 75 515 15 525zM290 675L375 670 398 705 375 735zM1305 425L1360 400V470L1345 480zM1290 615L1335 635 1290 665zM245 85L295 85 245 115z" />
                <path class="big" d="M500 380L515 372 560 445 545 452zM170 312L220 300 220 304 172 317zM375 358L430 318 432 324 380 364zM590 310L600 305 610 335 598 338zM1290 620h25v18h-25zM1300 835h12v25h-16zM350 685h35v22h-15z" />
                <path d="M780 20C690 50 640 80 648 130C660 200 700 230 735 270C785 320 795 380 762 430C710 500 650 540 560 580C480 620 440 680 465 720C500 790 600 810 700 840L880 895" stroke="#add19e" stroke-width="86" fill="none" />
                <path d="M780 20C690 50 640 80 648 130C660 200 700 230 735 270C785 320 795 380 762 430C710 500 650 540 560 580C480 620 440 680 465 720C500 790 600 810 700 840L880 895" class="river" />
                <path d="M695 270C730 310 745 350 735 430L722 350z" class="wood" />
                <path class="bound" d="M780 25C690 50 635 90 640 130C660 200 700 230 730 280C785 330 785 380 752 430C710 500 650 540 540 590C470 620 450 690 475 710C520 780 600 800 700 830L870 888" />
                <path class="bound wide" d="M1040 33L1118 112 1038 262 985 340 980 390 960 432 992 430 1022 518 993 530 1145 888M1358 520L1348 535 1358 550" />
                <path class="track" d="M760 65L860 205 985 335 980 390 930 490C880 570 860 590 870 640L928 710V790L982 825 976 888M960 432L1060 408 1210 750M720 215L780 280 800 340M505 680C510 720 560 750 600 760L740 800 800 830 900 870M800 410C760 480 700 540 620 580C540 620 500 650 505 690M1185 370L1230 490 1340 635 1210 750 1145 888M682 170C670 110 710 80 770 65M1295 33L1360 70" />
                <path class="cliff" d="M345 260L380 350 405 405 340 470M380 350L480 275 550 250M430 320L475 400M835 330L870 400 910 512M798 512L825 605 738 700 725 660M738 700L805 830M825 605L870 590M930 490L955 590M150 410L170 530M175 390L200 470M195 380L225 470M210 375L250 470M240 370L255 470M90 540L97 615M165 110L160 220 130 255 125 315 95 330M390 770L380 888M645 735L665 775M895 800L910 815 925 795M1165 260L1170 345M1250 535L1360 475M900 130L930 140 960 210 1035 255" />
                <path d="M375 70L560 440M350 80L480 42M380 45L370 75M0 75L90 55M120 140L160 210M215 130L300 90M100 180L95 240 70 265M85 330L120 315M140 140L230 120" stroke="#8ccbe4" stroke-width="5" stroke-dasharray="10 7" fill="none" />
                <path class="foot" d="M610 150L680 270 720 360 715 440 650 480 480 590 440 690 445 750 540 810 600 870 820 880" />
                <path class="blue" d="M572 35L585 90 612 150 622 80 650 35" />
                <g class="wcase"><path d="M500 60L520 100 550 240 593 410C580 470 500 510 480 560C480 620 420 670 417 710L430 750 392 770 360 735 310 693 202 697 195 610 180 560V478L340 471M180 534L90 540 82 480 75 445 50 440 50 400 72 350 58 280M58 280L110 150C140 110 200 80 350 70V50M1210 750L1240 820 1300 888M1340 635L1358 650" /></g>
                <g class="wroad"><path d="M500 60L520 100 550 240 593 410C580 470 500 510 480 560C480 620 420 670 417 710L430 750 392 770 360 735 310 693 202 697 195 610 180 560V478L340 471M180 534L90 540 82 480 75 445 50 440 50 400 72 350 58 280M58 280L110 150C140 110 200 80 350 70V50M1210 750L1240 820 1300 888M1340 635L1358 650" /></g>
                <path d="M1210 750L1145 888M1350 640L1210 750" stroke="#8ccbe4" stroke-width="7" stroke-dasharray="9 9" fill="none" />
                <path d="M-5 88L300 20H420L350 55 120 104 -5 130z" fill="#e892a2" stroke="#dc6f88" stroke-width="3" />
                <g fill="none">
                  <path d="M140 20C100 120 40 200 20 320C-10 440 20 560 40 650C55 720 55 800 52 895" stroke="#d37965" stroke-width="33" /><path d="M-5 150Q30 160 48 215M90 60Q80 100 10 80M155 30Q165 60 195 45V25M490 25Q525 75 560 25" stroke="#d37965" stroke-width="17" />
                  <path d="M140 20C100 120 40 200 20 320C-10 440 20 560 40 650C55 720 55 800 52 895" stroke="#f9b29c" stroke-width="28" /><path d="M-5 150Q30 160 48 215M90 60Q80 100 10 80M155 30Q165 60 195 45V25M490 25Q525 75 560 25" stroke="#f9b29c" stroke-width="12" />
                </g>
                <path d="M206 96L90 183 44 312 20 420M0 172L90 183" stroke="#999" stroke-width="2" fill="none" />
                <g v-for="(t, i) in [[965, 70], [1118, 125], [1230, 67], [1135, 242], [596, 515], [790, 45]]" :key="'t' + i" class="tree" :transform="`translate(${t[0]} ${t[1]})`"><ellipse cx="-9" cy="-5" rx="8" ry="9" /><path d="M-9 4V14M10 -12L2 9H18zM10 9V16" /></g>
              </g>
              <g font-size="12">
                <g fill="#4b1424"><text transform="translate(1482 1151) rotate(-13)" textLength="41">L'Alpine</text><text transform="translate(1526 1137) rotate(-12)" textLength="41">L'Alpine</text></g>
                <g fill="#4b1424"><text transform="translate(1401.300 1165.700) rotate(-12)" textLength="40.700">L'Alpine</text></g>
                <g fill="#51201a"><text transform="translate(1420 1274) rotate(-81)" textLength="62">Rocade Sud</text><text transform="translate(1424 1309) rotate(79)" textLength="62">Rocade Sud</text></g>
                <g class="halo thin" font-size="13"><text transform="translate(1599 1352) rotate(-54)" fill="#5077ba" textLength="40">L'Isère</text><text x="1415" y="1418" fill="#333" textLength="47">Pont de</text></g>
              </g>

              <g transform="translate(920 1120) scale(.33333)">
                <path d="M770 810L850 735Q860 700 820 700L780 740z" fill="#444" opacity=".3" />
                <path d="M766 809L727 742C700 696 726 658 766 658C806 658 832 696 805 742z" fill="url(#pin)" stroke="#2e6da4" stroke-width="3" />
                <circle cx="766" cy="705" r="16" fill="#fff" stroke="#2e6da4" stroke-width="2" />
              </g>
              <defs><linearGradient id="pin" x1="0" y1="0" x2="0" y2="1"><stop offset="0" stop-color="#4090cc" /><stop offset="1" stop-color="#126fc6" /></linearGradient></defs>
            </svg>
            <div class="zoomer">
              <button><svg viewBox="0 0 16 16"><path d="M8 0v16M0 8h16" /></svg></button>
              <button><svg viewBox="0 0 16 16"><path d="M0 8h16" /></svg></button>
            </div>
          </div>
        </section>
      </main>
    </div>
  </div>
</template>

<style>
body { margin: 0; background: #fafafa; overflow: hidden; }
</style>

<style scoped>
.app { width: 1999px; height: 1417px; overflow: hidden; display: flex; flex-direction: column; font-family: Roboto, sans-serif; font-size: 20.83px; color: rgba(0,0,0,.87); background: #fafafa; }
.ic { width: 31.2px; height: 31.2px; flex: none; fill: currentColor; }
.bar { height: 82px; flex: none; display: flex; align-items: center; background: #2196f3; color: #fff; position: relative; z-index: 2; box-shadow: 0 3px 5px -1px rgba(0,0,0,.25), 0 6px 13px rgba(0,0,0,.17), 0 1px 18px rgba(0,0,0,.12); }
.menu { width: 26px; height: 18.700px; margin-left: 31.300px; fill: none; stroke: #fff; stroke-width: 6.500; }
.logo { width: 220px; height: 46.700px; margin-left: 30.700px; margin-top: -5px; margin-right: -.7px; }
.cloud { fill: none; stroke: #fff; stroke-width: 6; stroke-linecap: round; }
.lora, .serv { font-size: 86px; fill: #fff; }
.lora { font-weight: 700; }
.serv { font-weight: 300; }
.search { display: flex; align-items: center; margin-left: 845.500px; width: 586.500px; height: 54px; border-radius: 5px; background: rgba(255,255,255,.15); }
.search .ic { margin-left: 6px; }
.search span { margin-left: 11px; color: rgba(255,255,255,.46); line-height: 26px; margin-top: -3px; }
.help { margin-left: 46.500px; }
.chip { display: flex; align-items: center; margin-left: 27px; width: 114px; height: 42px; border-radius: 21px; background: #1e88e5; font-size: 16.900px; }
.chip svg { width: 25px; height: 25px; margin-left: 8px; fill: #fff; }
.chip span { margin-left: 18.500px; }
.body { flex: 1; display: flex; min-height: 0; }
.side { width: 349px; flex: none; background: #fff; border-right: 1px solid #dedede; }
ul { list-style: none; margin: 0; padding: 0; }
.first { padding: 21.500px 0 10.500px; border-bottom: 1.300px solid #dcdcdc; }
.second { padding-top: 20px; }
li { display: flex; align-items: center; height: 62.570px; padding-left: 29.400px; }
li .ic { color: #757575; }
li span { margin-left: 41.700px; }
.antenna { fill: none; stroke: currentColor; stroke-width: 1.700; }
.antenna circle { fill: currentColor; stroke: none; }
.org { padding: 10px 31px 0 29.500px; color: #000; }
.orgselect { display: flex; align-items: center; justify-content: space-between; height: 44px; border-bottom: 1px solid #949494; }
.caret { width: 0; height: 0; border: 6.500px solid transparent; border-bottom: 0; border-top-color: #757575; margin-right: 6px; margin-top: 4px; }
main { flex: 1; display: flex; flex-direction: column; padding: 0 46px 0 47px; min-width: 0; }
h1 { margin: 62px 0 0; height: 73px; flex: none; font-size: 27.300px; font-weight: 500; line-height: 32px; display: flex; }
a { color: #2196f3; }
.sep { font-weight: 500; margin: 0 10.500px 0 11px; }
.card { flex: 1 0 auto; background: #fff; border-radius: 5px; padding: 41px 31px 0; box-shadow: 0 1px 4px rgba(0,0,0,.2), 0 1px 2px rgba(0,0,0,.14), 0 3px 1px -1px rgba(0,0,0,.1); }
label, p { display: block; font-size: 15.640px; color: #757575; margin: 0; }
label { height: 20px; line-height: 21.500px; }
.field:first-child label { line-height: 23px; }
em { font-style: normal; margin-left: 2.500px; }
p { line-height: 15.620px; margin-top: 12px; white-space: nowrap; }
.value { height: 41px; padding-top: 1px; border-bottom: 1px solid #949494; display: flex; align-items: center; line-height: 25px; }
.select .value { height: 40.500px; padding-top: 0; color: #000; }
.select .value span { margin-top: -1px; }
.value span:first-child { margin-right: auto; }
.field:first-child { height: 121px; }
.field:first-child .value { padding-top: 2px; height: 40.500px; }
.desc { height: 168px; }
.desc .area { display: block; height: 107.500px; padding-top: 8.500px; white-space: nowrap; }
.value.area span:first-child { margin-right: 0; }
.gid { height: 92px; }
.ns { height: 117px; }
.gp { height: 133px; }
.bad { background: radial-gradient(circle, #f00 1.900px, transparent 2.400px) 0 20px / 7.810px 5px repeat-x; display: inline-block; height: 26px; }
.check { display: flex; align-items: center; height: 26px; font-size: 18.240px; }
.check svg { width: 31.200px; height: 31.200px; fill: #2196f3; margin-left: -2.500px; }
.check span { margin-left: 15.300px; margin-top: -1px; }
.disc { margin-top: 30px; }
.alt { margin-top: 18px; height: 91px; }
.clear { width: 18px; height: 18px; margin: 2px 12px 0 0; fill: none; stroke: #666; stroke-width: 2.300; }
.spin { width: 16px; height: 26px; margin-right: 3px; fill: #fff; stroke: #bbb; stroke-width: 1; filter: drop-shadow(0 1px 1px rgba(0,0,0,.25)); }
.spin path { fill: none; stroke: #444; stroke-width: 1.800; }
.loc { margin-top: 27.600px; height: 34px; line-height: 26px; color: #757575; }
.alt p { margin-top: 12.500px; }
.loc a { text-decoration: underline; text-decoration-thickness: 1px; text-underline-offset: 3px; }
.map { position: relative; height: 286px; overflow: hidden; }
.tiles { width: 1494px; height: 286px; display: block; font-family: "Noto Sans", sans-serif; }
.zoomer { position: absolute; left: 14.500px; top: 14px; width: 40px; border-radius: 5px; background: #fff; box-shadow: 0 1px 4px rgba(0,0,0,.65); }
.zoomer button { display: flex; align-items: center; justify-content: center; width: 40px; height: 39.500px; padding: 7px 0 0; margin: 0; border: 0; background: none; box-sizing: border-box; }
.zoomer button:first-child { border-bottom: 1px solid #ccc; padding-top: 8px; }
.zoomer svg { width: 16px; height: 16px; stroke: #000; stroke-width: 2.300; margin-left: 2px; }
.res { fill: #e0dfdf; } .land { fill: #f2efe9; } .wood { fill: #add19e; } .grass { fill: #cdebb0; } .park { fill: #c8facc; }
.uni { fill: #ffffe5; } .big { fill: #cfc4bc; } .cem { fill: #aacbaf; } .pitch { fill: #aae0cb; } .farm { fill: #eef0d5; }
.ind { fill: #ebdbe8; } .yard { fill: #f5dcba; } .bld { fill: #d0c4bb; opacity: .75; } .speck { fill: #f4837a; opacity: .75; }
.street { fill: none; stroke: #fff; stroke-width: 6; }
.bank { fill: none; stroke: #b5d6a8; stroke-width: 60; }
.river { fill: none; stroke: #aad3df; stroke-width: 46; }
.wcase { fill: none; stroke: #c4c4c4; stroke-width: 13; }
.wroad { fill: none; stroke: #fff; stroke-width: 10; }
.ycase { fill: none; stroke: #c3c69b; stroke-width: 21; }
.yroad { fill: none; stroke: #f7fabf; stroke-width: 17; }
.bound { fill: none; stroke: #9a8fc8; stroke-width: 5; stroke-dasharray: 17 9; }
.bound.wide { stroke: #c48bc9; stroke-width: 6; }
.blue { fill: none; stroke: #4a4af0; stroke-width: 4; stroke-dasharray: 4 7; }
.foot { fill: none; stroke: #fa8072; stroke-width: 3; stroke-dasharray: 4 6; }
.fence { fill: none; stroke: #8d9489; stroke-width: 3; }
.cliff { fill: none; stroke: #bda35a; stroke-width: 3; stroke-dasharray: 13 7; }
.track { fill: none; stroke: #bca767; stroke-width: 3; }
.rail { fill: none; stroke: #555; stroke-width: 7; }
.stop { fill: #7080c4; }
.tree { fill: none; stroke: #7fa678; stroke-width: 3; }
.tomb { fill: #86b08b; }
.halo text { paint-order: stroke; stroke: rgba(255,255,255,.6); stroke-width: 5; }
.halo.thin text { stroke-width: 1.600; }
</style>
